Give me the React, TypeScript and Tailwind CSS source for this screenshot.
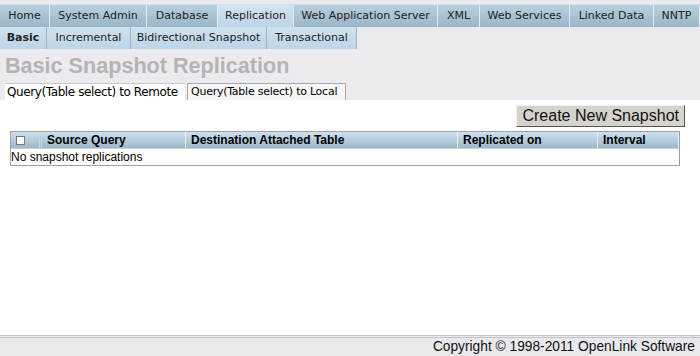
import React from 'react';

const mainTabs = [
  { label: 'Home', w: 'w-[50px]' },
  { label: 'System Admin', w: 'w-[97px]' },
  { label: 'Database', w: 'w-[71px]' },
  { label: 'Replication', w: 'w-[76px]', active: true },
  { label: 'Web Application Server', w: 'w-[144px]' },
  { label: 'XML', w: 'w-[42px]' },
  { label: 'Web Services', w: 'w-[90px]' },
  { label: 'Linked Data', w: 'w-[84px]' },
  { label: 'NNTP', w: 'w-[46px]' },
];

const subTabs = [
  { label: 'Basic', w: 'w-[47px]', active: true },
  { label: 'Incremental', w: 'w-[84px]' },
  { label: 'Bidirectional Snapshot', w: 'w-[136px]' },
  { label: 'Transactional', w: 'w-[90px]' },
];

const columns = [
  { label: 'Source Query', w: 'w-[144px]' },
  { label: 'Destination Attached Table', w: 'w-[272px]' },
  { label: 'Replicated on', w: 'w-[140px]' },
  { label: 'Interval', w: 'flex-1' },
];

export default function App() {
  return (
    <div className="w-[700px] h-[356px] bg-white flex flex-col font-['Liberation_Sans',Arial,sans-serif] text-black overflow-hidden">
      {/* top nav */}
      <div className="bg-[#ebeaef] pt-[4px]">
        <div className="flex h-[23px] border-t border-[#d8dee6]">
          {mainTabs.map((t) => (
            <div
              key={t.label}
              className={`${t.w} shrink-0 flex items-center justify-center border-r border-[#e4ebf2] text-[11px] font-['DejaVu_Sans',Verdana,sans-serif] text-[#222] ${
                t.active
                  ? 'bg-gradient-to-b from-[#d3e4f1] to-[#bcd4e7]'
                  : 'bg-gradient-to-b from-[#b9cfdd] to-[#9bb6c8]'
              }`}
            >
              {t.label}
            </div>
          ))}
        </div>
        <div className="flex h-[22px]">
          {subTabs.map((t) => (
            <div
              key={t.label}
              className={`${t.w} shrink-0 flex items-center justify-center border-r border-[#9fb6c7] bg-gradient-to-b from-[#cfe1ef] to-[#bcd5e8] text-[11px] font-['DejaVu_Sans',Verdana,sans-serif] text-[#222] ${
                t.active ? 'font-bold' : ''
              }`}
            >
              {t.label}
            </div>
          ))}
        </div>
        <h1 className="h-[34px] pl-[5px] pt-[2px] text-[21.6px] leading-[30px] font-bold text-[#b4b4b7]">
          Basic Snapshot Replication
        </h1>
        <div className="flex items-end h-[17px] pl-[5px]">
          <div className="w-[180px] h-[17px] pl-[2px] bg-white border-t border-[#c8c8c8] text-[12px] leading-[16px] font-['DejaVu_Sans',Verdana,sans-serif] tracking-[-0.4px] whitespace-nowrap">
            Query(Table select) to Remote
          </div>
          <div className="ml-[2px] w-[159px] h-[17px] pl-[3px] bg-[#f7f7f7] border border-b-0 border-[#a8a8a8] text-[11px] leading-[15px] font-['DejaVu_Sans',Verdana,sans-serif] tracking-[-0.25px] whitespace-nowrap">
            Query(Table select) to Local
          </div>
        </div>
      </div>

      {/* content */}
      <div className="flex-1 bg-white pt-[5px]">
        <div className="flex justify-end pr-[15px]">
          <button className="h-[22px] px-[5px] bg-[#d6d3cc] border border-t-[#f2f2f2] border-l-[#f2f2f2] border-r-[#555] border-b-[#555] text-[16px] leading-[18px] text-[#111]">
            Create New Snapshot
          </button>
        </div>
        <div className="mx-[10px] mt-[4px] w-[670px] border border-[#a0a0a0]">
          <div className="flex h-[16px] bg-gradient-to-b from-[#cfe0ec] to-[#9cb8ca] text-[12px] font-bold leading-[16px]">
            <div className="w-[31px] shrink-0 flex items-center pl-[5px] border-r-[3px] border-double border-[#c8d6e0]">
              <span className="w-[9px] h-[9px] bg-white border border-[#777] inline-block" />
            </div>
            {columns.map((c) => (
              <div key={c.label} className={`${c.w} shrink-0 pl-[5px] border-r border-[#e6eef4]`}>
                {c.label}
              </div>
            ))}
          </div>
          <div className="h-[17px] border-t border-[#d0d0d0] text-[12px] leading-[16px]">No snapshot replications</div>
        </div>
      </div>

      {/* footer */}
      <div className="h-[21px] bg-[#e9e8ed] border-t-[3px] border-double border-[#c4c4c8] flex items-center justify-end pr-[5px] text-[13.75px] text-[#111]">
        Copyright © 1998-2011 OpenLink Software
      </div>
    </div>
  );
}
